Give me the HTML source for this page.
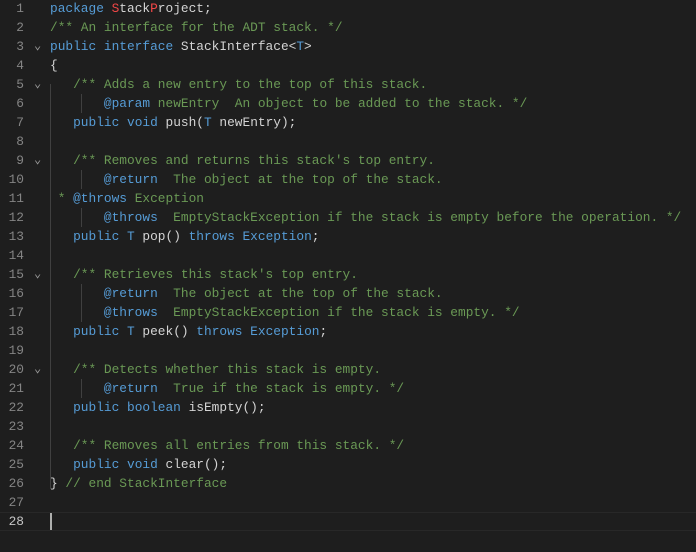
<!DOCTYPE html>
<html><head><meta charset="utf-8"><style>
html,body{margin:0;padding:0;background:#1e1e1e;width:696px;height:552px;overflow:hidden}
#ed{position:absolute;left:0;top:-1px;width:696px;font-family:"Liberation Mono",monospace;font-size:12.83px;}
.l{position:relative;height:19px;line-height:19px;white-space:pre;}
.n{position:absolute;left:0;width:24px;text-align:right;color:#858585;}
.c{position:absolute;left:50px;color:#d4d4d4;}
.f{position:absolute;left:34px;top:0;color:#9a9a9a;font-size:12px;}
.k{color:#569cd6}.g{color:#6a9955}.r{color:#f44747}.w{color:#d4d4d4}
.cur{position:absolute;left:0;top:0;width:696px;height:17px;border-top:1px solid #282828;border-bottom:1px solid #282828;}
.gd{position:absolute;width:1px;background:#404040}
.caret{position:absolute;left:50px;top:1px;width:2px;height:17px;background:#aeafad}
</style></head><body>
<div class="gd" style="left:50px;top:84px;height:405px"></div>
<div class="gd" style="left:81px;top:94px;height:19px"></div>
<div class="gd" style="left:81px;top:170px;height:19px"></div>
<div class="gd" style="left:81px;top:208px;height:19px"></div>
<div class="gd" style="left:81px;top:284px;height:38px"></div>
<div class="gd" style="left:81px;top:379px;height:19px"></div>
<div id="ed">
<div class="l"><span class="n">1</span><span class="c"><span class="k">package</span> <span class="r">S</span>tack<span class="r">P</span>roject;</span></div>
<div class="l"><span class="n">2</span><span class="c g">/** An interface for the ADT stack. */</span></div>
<div class="l"><span class="n">3</span><span class="f">&#8964;</span><span class="c"><span class="k">public interface</span> StackInterface&lt;<span class="k">T</span>&gt;</span></div>
<div class="l"><span class="n">4</span><span class="c">{</span></div>
<div class="l"><span class="n">5</span><span class="f">&#8964;</span><span class="c g">   /** Adds a new entry to the top of this stack.</span></div>
<div class="l"><span class="n">6</span><span class="c g">       <span class="k">@param</span> newEntry  An object to be added to the stack. */</span></div>
<div class="l"><span class="n">7</span><span class="c">   <span class="k">public void</span> <span class="w">push</span>(<span class="k">T</span> newEntry);</span></div>
<div class="l"><span class="n">8</span></div>
<div class="l"><span class="n">9</span><span class="f">&#8964;</span><span class="c g">   /** Removes and returns this stack's top entry.</span></div>
<div class="l"><span class="n">10</span><span class="c g">       <span class="k">@return</span>  The object at the top of the stack.</span></div>
<div class="l"><span class="n">11</span><span class="c g"> * <span class="k">@throws</span> Exception</span></div>
<div class="l"><span class="n">12</span><span class="c g">       <span class="k">@throws</span>  EmptyStackException if the stack is empty before the operation. */</span></div>
<div class="l"><span class="n">13</span><span class="c">   <span class="k">public T</span> pop() <span class="k">throws Exception</span>;</span></div>
<div class="l"><span class="n">14</span></div>
<div class="l"><span class="n">15</span><span class="f">&#8964;</span><span class="c g">   /** Retrieves this stack's top entry.</span></div>
<div class="l"><span class="n">16</span><span class="c g">       <span class="k">@return</span>  The object at the top of the stack.</span></div>
<div class="l"><span class="n">17</span><span class="c g">       <span class="k">@throws</span>  EmptyStackException if the stack is empty. */</span></div>
<div class="l"><span class="n">18</span><span class="c">   <span class="k">public T</span> peek() <span class="k">throws Exception</span>;</span></div>
<div class="l"><span class="n">19</span></div>
<div class="l"><span class="n">20</span><span class="f">&#8964;</span><span class="c g">   /** Detects whether this stack is empty.</span></div>
<div class="l"><span class="n">21</span><span class="c g">       <span class="k">@return</span>  True if the stack is empty. */</span></div>
<div class="l"><span class="n">22</span><span class="c">   <span class="k">public boolean</span> isEmpty();</span></div>
<div class="l"><span class="n">23</span></div>
<div class="l"><span class="n">24</span><span class="c g">   /** Removes all entries from this stack. */</span></div>
<div class="l"><span class="n">25</span><span class="c">   <span class="k">public void</span> clear();</span></div>
<div class="l"><span class="n">26</span><span class="c">} <span class="g">// end StackInterface</span></span></div>
<div class="l"><span class="n">27</span></div>
<div class="l"><div class="cur"></div><span class="n" style="color:#c6c6c6">28</span><div class="caret"></div></div>
</div>
</body></html>
